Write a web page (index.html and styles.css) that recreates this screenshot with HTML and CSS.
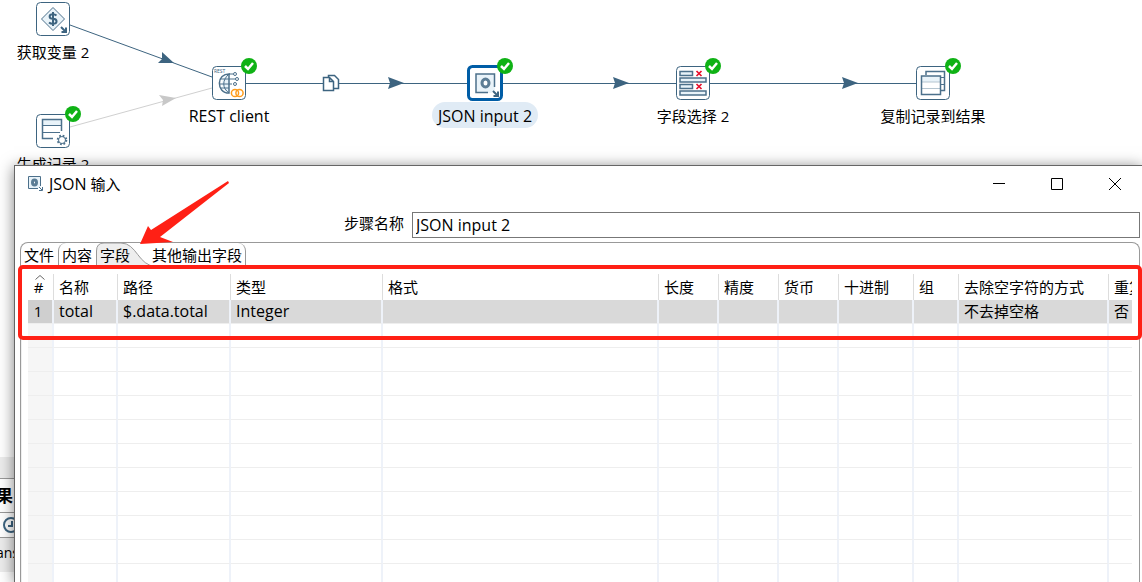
FILE: index.html
```html
<!DOCTYPE html>
<html lang="zh-CN">
<head>
<meta charset="utf-8">
<title>JSON 输入</title>
<link rel="stylesheet" href="styles.css">
</head>
<body>
<main class="workspace">
  <section class="canvas" aria-label="转换画布">
    <svg class="hops" aria-hidden="true">
      <g class="hop">
        <path d="M70 25 212 77M246 83.500H468M502 83.500H676M710 83.500H916"/>
        <path class="head" d="M162 52 174 63 158 63 162 59Z M388 77 404 83 388 89 390 83Z M613 77 629 83 613 89 615 83Z M842 77 858 83 842 89 844 83Z"/>
      </g>
      <g class="hop disabled">
        <path d="M70 127 212 88"/>
        <path class="head" d="M159 95 176 98 162 106 163 100Z"/>
      </g>
      <g class="copies">
        <path d="M328.500 75.500h6l4 4v9h-10z"/>
        <path d="M323.500 77.500h6l4 4v9h-10z M329.500 77.500v4h4"/>
      </g>
    </svg>

    <div class="node node-variables">
      <svg class="icon" viewBox="0 0 34 34"><rect class="frame" x=".5" y=".5" width="33" height="33" rx="4"/><path class="fill line" d="M17 5.500 28.500 17 17 28.500 5.500 17Z"/><path class="bold" d="M20.500 13.500Q19 12.200 17 12.200C12.500 12.200 12.500 16.500 17 16.800C22 17.200 21.500 21.800 17 21.800Q14.500 21.800 13 20.500M17 10v14"/><path class="bold" d="M25 25 30 30M30 25.500v4.500h-4.500"/></svg>
      <span class="caption">获取变量 2</span>
    </div>

    <div class="node node-rows">
      <svg class="icon" viewBox="0 0 34 34"><rect class="frame" x=".5" y=".5" width="33" height="33" rx="4"/><path class="fill" d="M7 6h18v6H7z"/><path class="line" d="M7 11.500H25M7 18.500H24"/><path class="line heavy" d="M17 24.500H6.500V5.500H25.500V17"/><circle class="line" cx="26" cy="26" r="3.500"/><circle class="teeth" cx="26" cy="26" r="4.300"/></svg>
      <svg class="badge" viewBox="0 0 16 16"><circle cx="8" cy="8" r="8"/><path d="M4 8 7 11 12 5"/></svg>
      <span class="caption">生成记录 2</span>
    </div>

    <div class="node node-rest">
      <svg class="icon" viewBox="0 0 34 34"><rect class="frame" x=".5" y=".5" width="33" height="33" rx="4"/><text class="tiny" x="2" y="7">REST</text><path class="fill" d="M17 8A10 10 0 0 0 17 27Z"/><path class="line" d="M8 13H24M7 18H20M8 22H17M17 8H21M17 8C10 14 10 22 17 27"/><path class="line heavy" d="M18 8C4 7 4 27 17 27V8"/><g class="node-dot"><circle cx="23" cy="8" r="1.500"/><circle cx="25" cy="13" r="1.500"/><circle cx="23" cy="18" r="1.500"/></g><circle class="link-ring" cx="23" cy="27" r="3.600"/><circle class="link-ring" cx="27.500" cy="27" r="3.600"/></svg>
      <svg class="badge" viewBox="0 0 16 16"><circle cx="8" cy="8" r="8"/><path d="M4 8 7 11 12 5"/></svg>
      <span class="caption latin">REST client</span>
    </div>

    <div class="node node-json selected">
      <svg class="icon" viewBox="0 0 34 34"><rect class="frame" x=".5" y=".5" width="33" height="33" rx="4"/><path class="fill" d="M8 8h19v16l-4 3H8z"/><path class="line heavy" d="M20 26.500H8V8H26.500V21"/><ellipse class="ring" cx="17.500" cy="17" rx="3.500" ry="4"/><path class="bold" d="M25 25 30 30M30 25.500v4.500h-4.500"/></svg>
      <svg class="badge" viewBox="0 0 16 16"><circle cx="8" cy="8" r="8"/><path d="M4 8 7 11 12 5"/></svg>
      <span class="caption latin">JSON input 2</span>
    </div>

    <div class="node node-select">
      <svg class="icon" viewBox="0 0 34 34"><rect class="frame" x=".5" y=".5" width="33" height="33" rx="4"/><path class="line heavy fill" d="M4 5.500h12.500v4h-12.500zM4 12h26v4h-26zM4 18.500h12.500v4h-12.500zM4 25h26v4h-26z"/><path class="cross" d="M20.500 5 25.500 10M25.500 5 20.500 10M20.500 18 25.500 23M25.500 18 20.500 23"/></svg>
      <svg class="badge" viewBox="0 0 16 16"><circle cx="8" cy="8" r="8"/><path d="M4 8 7 11 12 5"/></svg>
      <span class="caption">字段选择 2</span>
    </div>

    <div class="node node-copy">
      <svg class="icon" viewBox="0 0 34 34"><rect class="frame" x=".5" y=".5" width="33" height="33" rx="4"/><path class="line heavy" d="M10 9V5.500H28.500V24.500H25"/><path class="line" d="M24 11.500H28M25 18.500H28"/><path class="blank" d="M5.500 9.500h19v19h-19z"/><path class="fill" d="M6 10h18v6H6z"/><path class="hair" d="M6 16H24M6 22.500H24"/><path class="line heavy" d="M5.500 10h19v18.500h-19z"/></svg>
      <svg class="badge" viewBox="0 0 16 16"><circle cx="8" cy="8" r="8"/><path d="M4 8 7 11 12 5"/></svg>
      <span class="caption">复制记录到结果</span>
    </div>
  </section>

  <section class="results" aria-label="执行结果">
    <div class="sash"></div>
    <h2 class="results-title">果</h2>
    <div class="results-tabs"><svg class="clock" viewBox="0 0 16 16"><circle cx="8" cy="8" r="7"/><path d="M9 4v5H5"/></svg></div>
    <div class="results-head">ans</div>
  </section>

  <section class="dialog" role="dialog" aria-labelledby="dialog-title">
    <header class="titlebar">
      <svg class="title-icon" viewBox="0 0 16 16"><path class="fill" d="M1 1h12v11H1z"/><path class="line" d="M10 12.500H.5V.5H12.500V10"/><ellipse class="ring" cx="6.500" cy="6.500" rx="2" ry="2.500"/><path class="line" d="M11 11 14 14M14.500 11v3.500H11"/></svg>
      <h1 class="title" id="dialog-title"><span class="latin">JSON</span> 输入</h1>
      <button class="win-btn" type="button" aria-label="最小化"><svg viewBox="0 0 12 12"><path d="M0 5.500H12"/></svg></button>
      <button class="win-btn" type="button" aria-label="最大化"><svg viewBox="0 0 12 12"><path d="M.5.5h11v11H.5z"/></svg></button>
      <button class="win-btn" type="button" aria-label="关闭"><svg viewBox="0 0 12 12"><path d="M0 0 12 12M12 0 0 12"/></svg></button>
    </header>

    <div class="content">
      <div class="form-row">
        <label class="form-label" for="step-name">步骤名称</label>
        <input class="form-input latin" id="step-name" type="text" value="JSON input 2">
      </div>

      <div class="folder">
        <div class="tabs" role="tablist">
          <button class="tab" role="tab" type="button">文件</button>
          <button class="tab" role="tab" type="button">内容</button>
          <button class="tab active" role="tab" type="button" aria-selected="true"><svg class="tab-shape" viewBox="0 0 60 24"><path d="M.5 24V8Q.5 0 8 0H25C41 0 42 23 60 23.500V24Z"/></svg><span class="tab-text">字段</span></button>
          <button class="tab last" role="tab" type="button">其他输出字段</button>
        </div>
        <div class="panel">
          <div class="grid-view">
            <table class="fields">
              <colgroup><col class="w-num"><col class="w-name"><col class="w-path"><col class="w-type"><col class="w-format"><col class="w-short"><col class="w-short"><col class="w-short"><col class="w-decimal"><col class="w-group"><col class="w-trim"><col class="w-repeat"></colgroup>
              <thead><tr><th class="sorted">#<svg class="sort" viewBox="0 0 10 5"><path d="M.5 4.500 5 .5 9.500 4.500"/></svg></th><th>名称</th><th>路径</th><th>类型</th><th>格式</th><th>长度</th><th>精度</th><th>货币</th><th>十进制</th><th>组</th><th>去除空字符的方式</th><th>重复</th></tr></thead>
              <tbody>
                <tr class="current"><td>1</td><td>total</td><td>$.data.total</td><td>Integer</td><td></td><td></td><td></td><td></td><td></td><td></td><td class="han">不去掉空格</td><td class="han">否</td></tr>
                <tr><td></td><td></td><td></td><td></td><td></td><td></td><td></td><td></td><td></td><td></td><td></td><td></td></tr>
                <tr><td></td><td></td><td></td><td></td><td></td><td></td><td></td><td></td><td></td><td></td><td></td><td></td></tr>
                <tr><td></td><td></td><td></td><td></td><td></td><td></td><td></td><td></td><td></td><td></td><td></td><td></td></tr>
                <tr><td></td><td></td><td></td><td></td><td></td><td></td><td></td><td></td><td></td><td></td><td></td><td></td></tr>
                <tr><td></td><td></td><td></td><td></td><td></td><td></td><td></td><td></td><td></td><td></td><td></td><td></td></tr>
                <tr><td></td><td></td><td></td><td></td><td></td><td></td><td></td><td></td><td></td><td></td><td></td><td></td></tr>
                <tr><td></td><td></td><td></td><td></td><td></td><td></td><td></td><td></td><td></td><td></td><td></td><td></td></tr>
                <tr><td></td><td></td><td></td><td></td><td></td><td></td><td></td><td></td><td></td><td></td><td></td><td></td></tr>
                <tr><td></td><td></td><td></td><td></td><td></td><td></td><td></td><td></td><td></td><td></td><td></td><td></td></tr>
                <tr><td></td><td></td><td></td><td></td><td></td><td></td><td></td><td></td><td></td><td></td><td></td><td></td></tr>
                <tr><td></td><td></td><td></td><td></td><td></td><td></td><td></td><td></td><td></td><td></td><td></td><td></td></tr>
              </tbody>
            </table>
          </div>
          <div class="highlight"></div>
          <svg class="pointer" viewBox="0 0 90 64" aria-hidden="true"><path d="M0 63 8 45 11 49 88 0 89 2 20 56 33 61Z"/></svg>
        </div>
      </div>
    </div>
  </section>
</main>
</body>
</html>
```
FILE: styles.css
```css
* { box-sizing: border-box; }

body {
  margin: 0;
  background: #fff;
  color: #000;
  font: 15px/24px "Open Sans", "Noto Sans CJK SC", sans-serif;
}

button, input { font: inherit; color: inherit; }

.workspace {
  position: relative;
  display: flex;
  flex-direction: column;
  height: 100vh;
  overflow: hidden;
}

/* Diagram */
.canvas { position: relative; flex: 1; }
.hops { position: absolute; inset: 0; width: 100%; height: 100%; }
.hop { stroke: #3d6480; fill: none; }
.hop .head { fill: #3d6480; stroke: none; }
.hop.disabled { stroke: #d0d0d0; }
.hop.disabled .head { fill: #c8c8c8; }
.copies { fill: #fff; stroke: #3d6480; stroke-width: 1.5; }

.node {
  position: absolute;
  display: flex;
  flex-direction: column;
  align-items: center;
  width: 140px;
}
.node-variables { left: -17px; top: 2px; }
.node-rows { left: -17px; top: 114px; }
.node-rest { left: 159px; top: 66px; }
.node-json { left: 415px; top: 66px; }
.node-select { left: 623px; top: 66px; }
.node-copy { left: 863px; top: 66px; }

.icon { width: 34px; height: 34px; overflow: visible; }
.caption {
  margin-top: 2px;
  padding: 2px 6px 0;
  border-radius: 13px;
  line-height: 24px;
  white-space: nowrap;
}
.latin { font-size: 16px; }
.selected .caption { background: #e0ebf5; }
.frame { fill: #fff; stroke: #3d6480; }
.selected .frame { stroke: #005da6; stroke-width: 3; }
.line { fill: none; stroke: #4c708b; }
.heavy { stroke-width: 1.5; }
.fill { fill: #e9f3f9; }
.blank { fill: #fff; }
.hair { fill: none; stroke: #b5c5d0; }
.bold { fill: none; stroke: #3d6480; stroke-width: 2; }
.ring { fill: #fff; stroke: #5c7d95; stroke-width: 3; }
.teeth { fill: none; stroke: #4c708b; stroke-width: 2; stroke-dasharray: 1.700 1.700; }
.tiny { font-size: 5px; fill: #3d6480; }
.node-dot { fill: #fff; stroke: #4c708b; }
.link-ring { fill: none; stroke: #ff9c1a; stroke-width: 1.5; }
.cross { fill: none; stroke: #e8112d; stroke-width: 1.700; }
.badge { position: absolute; left: 82px; top: -8px; width: 16px; height: 16px; }
.badge circle { fill: #0fb215; }
.badge path { fill: none; stroke: #fff; stroke-width: 2.5; }

/* Execution results */
.results { height: 125px; border-bottom: 10px solid #fff; background: #ececec; }
.sash { height: 21px; background: #ececec; }
.results-title {
  height: 35px;
  margin: 0;
  border: solid #999;
  border-width: 1px 0;
  background: #fff;
  font-size: 17px;
  line-height: 34px;
  text-indent: -4px;
}
.results-tabs { height: 25px; padding: 4px 3px; border-bottom: 1px solid #999; background: #fff; }
.clock { display: block; width: 16px; height: 16px; fill: none; stroke: #3d6480; stroke-width: 2; }
.results-head { font-size: 14px; line-height: 30px; text-indent: -4px; }

/* Dialog */
.dialog {
  position: absolute;
  inset: 165px 0 0 14px;
  display: flex;
  flex-direction: column;
  border: solid #666;
  border-width: 1px 0 0 1px;
  background: #fff;
  box-shadow: 0 2px 14px rgba(0, 0, 0, 0.5);
}
.titlebar { display: flex; align-items: center; height: 36px; margin-right: -2px; padding-left: 13px; }
.title-icon { width: 16px; height: 16px; }
.title { flex: 1; margin: 0; padding-left: 5px; font-size: 15px; font-weight: 400; }
.win-btn {
  display: grid;
  place-items: center;
  width: 58px;
  height: 36px;
  padding: 0;
  border: 0;
  background: none;
}
.win-btn svg { width: 12px; height: 12px; fill: none; stroke: #000; }

.content { display: flex; flex: 1; flex-direction: column; gap: 4px; min-height: 0; padding: 10px 2px 0 5px; }
.form-row { display: grid; grid-template-columns: 35% 1fr; }
.form-label { padding-right: 8px; text-align: right; line-height: 22px; }
.form-input { width: 100%; height: 26px; padding: 0 3px; border: 1px solid #777; border-radius: 0; background: #fff; }

.folder {
  display: flex;
  flex: 1;
  flex-direction: column;
  min-height: 0;
  border: 1px solid #999;
  border-bottom: 0;
  border-radius: 8px 8px 0 0;
}
.tabs { display: flex; height: 24px; border-bottom: 1px solid #999; }
.tab {
  position: relative;
  height: 24px;
  padding: 0 4px 0 3px;
  border: 0;
  background: none;
  line-height: 24px;
  white-space: nowrap;
}
.tab + .tab { border-left: 1px solid #999; border-top-left-radius: 8px; }
.tabs .active { border: 0; padding-left: 4px; }
.tab-shape { position: absolute; left: 0; top: 0; width: 60px; height: 24px; fill: #eee; stroke: #999; }
.tab-text { position: relative; }
.tabs .last { margin-left: 14px; padding: 0 3px 0 4px; border-left: 0; border-right: 1px solid #999; border-radius: 0 8px 0 0; }

.panel { position: relative; flex: 1; min-height: 0; padding: 7px 7px 0 6px; border-left: 1px solid #eee; }
.grid-view { height: 100%; overflow: hidden; }
.fields { width: 1205px; table-layout: fixed; border-collapse: separate; border-spacing: 0; }
.w-num { width: 26px; }
.w-name { width: 64px; }
.w-path { width: 113px; }
.w-type { width: 152px; }
.w-format { width: 276px; }
.w-short { width: 60px; }
.w-decimal { width: 75px; }
.w-group { width: 45px; }
.w-trim { width: 150px; }
.w-repeat { width: 124px; }

.fields th, .fields td { padding: 0 0 0 5px; text-align: left; font-weight: 400; white-space: nowrap; line-height: 23px; }
.fields th { height: 26px; border-right: 1px solid #ddd; }
.fields td { height: 24px; border-right: 2px solid #eef2f9; border-bottom: 1px solid #eee; font-size: 16px; }
.fields .han { font-size: 15px; }
.fields td:first-child { background: #f6f6f6; }
.fields th:first-child, .fields td:first-child { padding: 0 4px 0 0; text-align: center; font-size: 15px; }
.fields .current td { background: #d9d9d9; background-clip: padding-box; }
.fields .current td:first-child { background-color: #cfcfcf; }
.fields .sorted { position: relative; }
.sort { position: absolute; left: 7px; top: 1px; width: 10px; height: 5px; fill: none; stroke: #666; }

/* Annotations over the dialog */
.highlight { position: absolute; left: -4px; right: -3px; top: -2px; height: 75px; border: 4px solid #ff2015; border-radius: 5px; }
.pointer { position: absolute; left: 118px; top: -86px; width: 90px; height: 64px; fill: #ff2015; }
```
